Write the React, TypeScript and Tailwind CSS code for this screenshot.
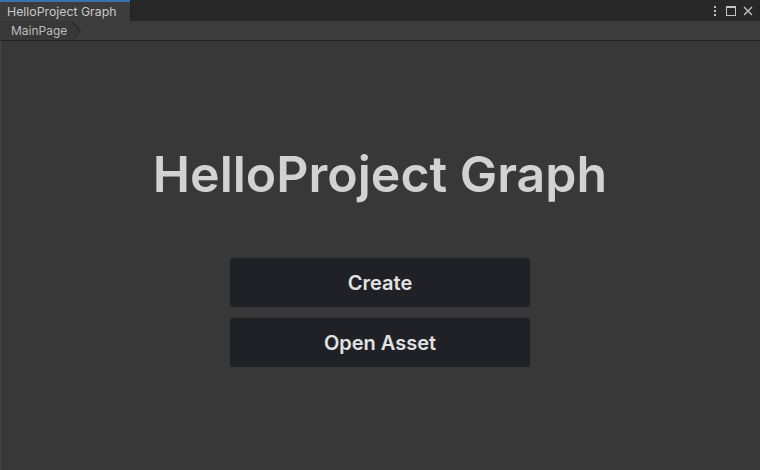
export default function App() {
  return (
    <div className="flex h-[470px] w-[760px] flex-col overflow-hidden bg-[#383838] font-['Inter',sans-serif]">
      {/* tab strip */}
      <div className="flex h-[21px] shrink-0 items-stretch bg-[#282828]">
        <div className="flex w-[131px] flex-col border-r border-[#232323] bg-[#3c3c3c]">
          <div className="h-[2px] bg-[#3a72b0]" />
          <div className="flex flex-1 items-center pl-[7px] pt-[1px] text-[12.3px] text-[#c8c8c8]">
            HelloProject Graph
          </div>
        </div>
        <div className="flex-1" />
        <div className="flex items-center gap-[5px] pr-[6px] text-[#c4c4c4]">
          <svg width="10" height="12" viewBox="0 0 10 12">
            <rect x="4" y="1" width="2" height="2" fill="currentColor" />
            <rect x="4" y="5" width="2" height="2" fill="currentColor" />
            <rect x="4" y="9" width="2" height="2" fill="currentColor" />
          </svg>
          <svg width="12" height="12" viewBox="0 0 12 12">
            <rect x="1.5" y="1.5" width="9" height="9" fill="none" stroke="currentColor" strokeWidth="1" />
            <rect x="1" y="1" width="10" height="2" fill="currentColor" />
          </svg>
          <svg width="12" height="12" viewBox="0 0 12 12">
            <path d="M2 2 L10 10 M10 2 L2 10" stroke="currentColor" strokeWidth="1.4" />
          </svg>
        </div>
      </div>
      {/* breadcrumb bar */}
      <div className="flex h-[20px] shrink-0 items-stretch border-b border-[#232323] bg-[#3c3c3c]">
        <div className="relative flex w-[81px] items-center bg-[#383838] pl-[11px] text-[12px] text-[#bcbcbc] [clip-path:polygon(0_0,72px_0,81px_50%,72px_100%,0_100%)]">
          MainPage
          <svg className="absolute left-0 top-0" width="81" height="20" viewBox="0 0 81 20">
            <path d="M72 0.5 L80.5 10 L72 19.5" fill="none" stroke="#262626" strokeWidth="1.2" />
          </svg>
        </div>
      </div>
      {/* main */}
      <div className="flex flex-1 flex-col items-center shadow-[inset_1px_0_0_#4a4540]">
        <h1 className="mt-[108px] text-[50px] font-semibold leading-none text-[#d2d2d2]">
          HelloProject Graph
        </h1>
        <div className="mt-[59px] flex flex-col gap-[11px]">
          <button className="h-[49px] w-[300px] rounded-[3px] bg-[#1f2126] text-[20px] font-semibold text-[#e2e2e2]">
            Create
          </button>
          <button className="h-[49px] w-[300px] rounded-[3px] bg-[#1f2126] text-[20px] font-semibold text-[#e2e2e2]">
            Open Asset
          </button>
        </div>
      </div>
    </div>
  );
}
